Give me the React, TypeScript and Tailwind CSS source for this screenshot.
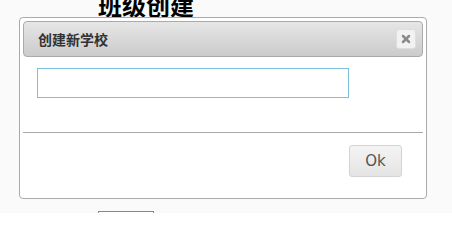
import { X } from "lucide-react";

const cjk = { fontFamily: '"Noto Sans CJK SC", "Noto Sans", sans-serif' };

function CreateSchoolDialog() {
  return (
    <div className="absolute left-[19px] top-[17px] w-[408px] rounded-[4px] border border-[#aaaaaa] bg-white p-[3px]">
      {/* Title bar */}
      <div className="flex h-[36px] items-center justify-between rounded-[4px] border border-[#aaaaaa] bg-gradient-to-b from-[#e6e6e6] to-[#cbcbcb] pl-[14px] pr-[6px]">
        <span className="text-[14px] font-bold leading-none text-[#333333]" style={cjk}>
          创建新学校
        </span>
        <button className="flex h-[20px] w-[20px] items-center justify-center rounded-[3px] border border-[#dedede] bg-[#f2f2f2]">
          <X className="h-[12px] w-[12px] text-[#8a8a8a]" strokeWidth={5} />
        </button>
      </div>

      {/* Content */}
      <div className="px-[14px] pb-[34px] pt-[11px]">
        <input className="block h-[30px] w-[312px] border border-[#7cc0dc] bg-white outline-none" />
      </div>

      {/* Button pane */}
      <div className="flex justify-end border-t border-[#aaaaaa] pb-[18px] pr-[21px] pt-[12px]">
        <button
          className="h-[32px] w-[53px] rounded-[3px] border border-[#d3d3d3] bg-gradient-to-b from-[#f4f4f4] to-[#e4e4e4] text-[15px] text-[#555555]"
          style={{ fontFamily: '"DejaVu Sans", Verdana, sans-serif' }}
        >
          Ok
        </button>
      </div>
    </div>
  );
}

export default function App() {
  return (
    <div className="relative h-[213px] overflow-hidden bg-[#fafafa]">
      <div className="pl-[98px]">
        <h1 className="-mt-[7px] h-[24px] text-[24px] font-bold leading-[24px] text-black" style={cjk}>
          班级创建
        </h1>
        <div className="mt-[194px] h-[20px] w-[56px] border border-[#888888] bg-white" />
      </div>
      <CreateSchoolDialog />
    </div>
  );
}
